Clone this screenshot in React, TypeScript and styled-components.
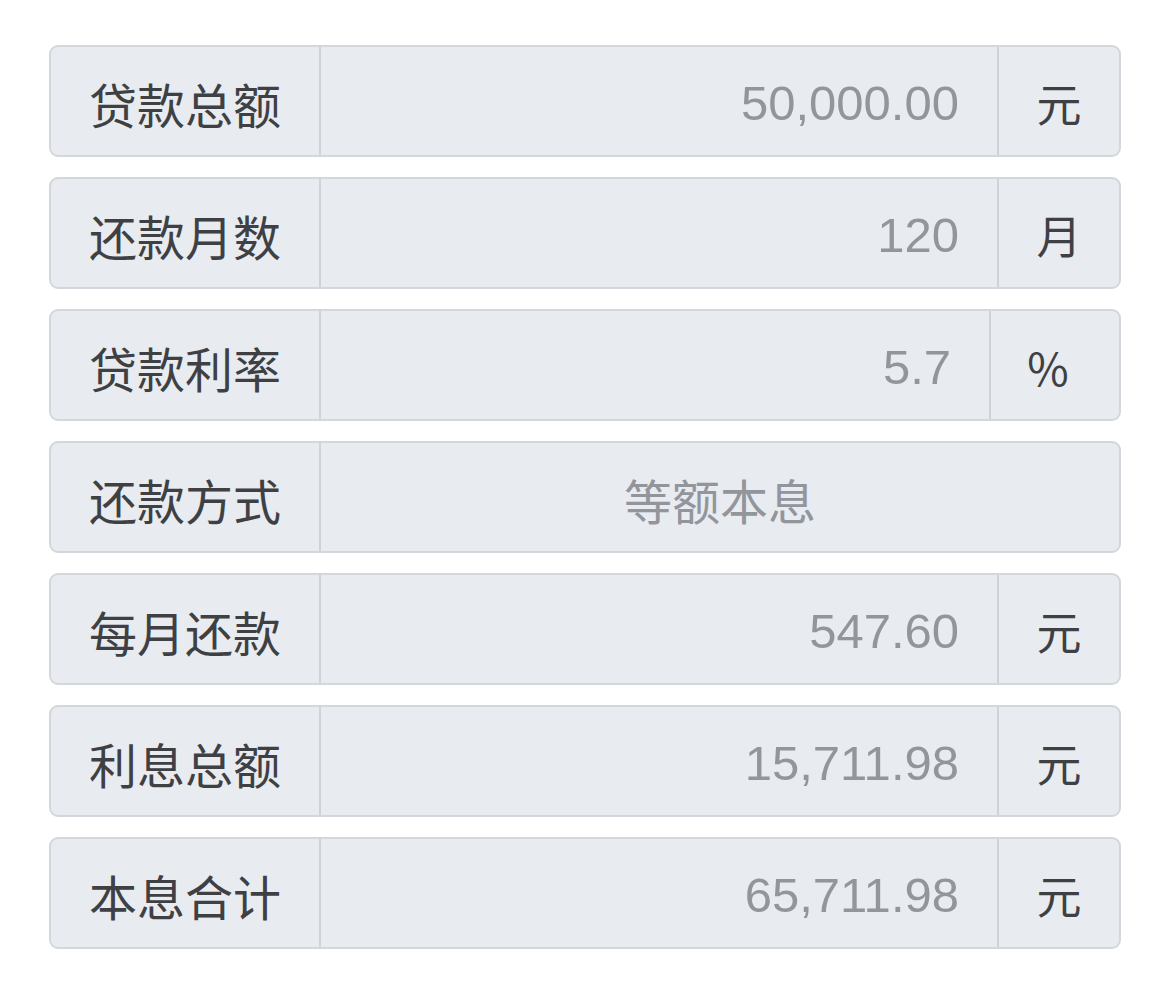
import React from 'react'
import styled, { createGlobalStyle } from 'styled-components'

const GlobalStyle = createGlobalStyle`
  html, body {
    margin: 0;
    padding: 0;
    background: #fff;
  }
`

const Page = styled.div`
  width: 1170px;
  height: 1002px;
  box-sizing: border-box;
  padding: 45px 49px 0 49px;
  display: flex;
  flex-direction: column;
  gap: 20px;
  font-family: "Liberation Sans", "Noto Sans CJK SC", sans-serif;
`

const Row = styled.div`
  display: flex;
  height: 112px;
  box-sizing: border-box;
  border: 2px solid #d3d6da;
  border-radius: 9px;
  background: #e8ebef;
  overflow: hidden;
`

const Label = styled.div`
  width: 270px;
  flex-shrink: 0;
  box-sizing: border-box;
  padding-left: 38px;
  padding-top: 3px;
  display: flex;
  align-items: center;
  font-size: 48px;
  color: #3e4044;
  font-family: "Noto Sans CJK SC", sans-serif;
  border-right: 2px solid #cfd2d6;
`

const Value = styled.div<{ $center?: boolean }>`
  flex: 1;
  display: flex;
  align-items: center;
  justify-content: ${p => (p.$center ? 'center' : 'flex-end')};
  padding-right: ${p => (p.$center ? '0' : '38px')};
  padding-top: 4px;
  font-size: ${p => (p.$center ? '48px' : '49px')};
  color: #92969c;
  font-family: ${p => (p.$center ? '"Noto Sans CJK SC", sans-serif' : '"Liberation Sans", sans-serif')};
`

const Unit = styled.div<{ $wide?: boolean }>`
  width: ${p => (p.$wide ? '130px' : '122px')};
  flex-shrink: 0;
  box-sizing: border-box;
  padding-right: ${p => (p.$wide ? '14px' : '0')};
  padding-top: 3px;
  display: flex;
  align-items: center;
  justify-content: center;
  border-left: 2px solid #cfd2d6;
  font-size: 45px;
  color: #3e4044;
  font-family: "Noto Sans CJK SC", sans-serif;
`

type Item = {
  label: string
  value: string
  unit?: string
}

const items: Item[] = [
  { label: '贷款总额', value: '50,000.00', unit: '元' },
  { label: '还款月数', value: '120', unit: '月' },
  { label: '贷款利率', value: '5.7', unit: '%' },
  { label: '还款方式', value: '等额本息' },
  { label: '每月还款', value: '547.60', unit: '元' },
  { label: '利息总额', value: '15,711.98', unit: '元' },
  { label: '本息合计', value: '65,711.98', unit: '元' },
]

const App: React.FC = () => {
  return (
    <>
      <GlobalStyle />
      <Page>
        {items.map(item => (
          <Row key={item.label}>
            <Label>{item.label}</Label>
            <Value $center={!item.unit}>{item.value}</Value>
            {item.unit && <Unit $wide={item.unit === '%'}>{item.unit}</Unit>}
          </Row>
        ))}
      </Page>
    </>
  )
}

export default App
